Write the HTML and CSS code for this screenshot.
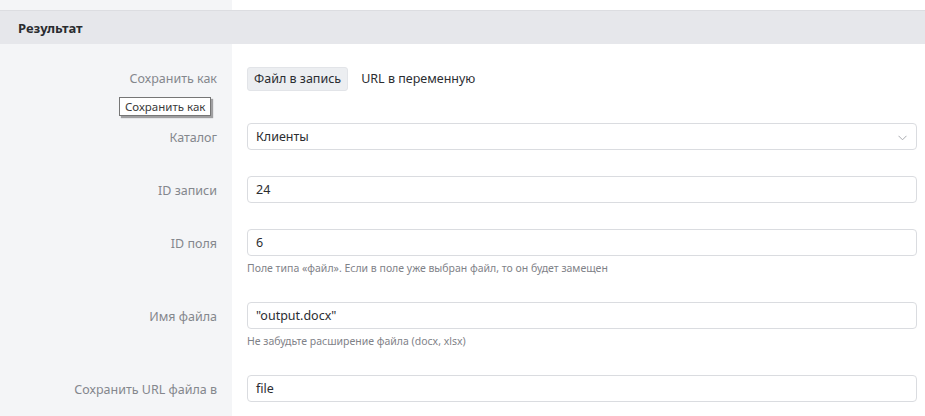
FILE: index.html
```html
<!DOCTYPE html>
<html lang="ru">
<head>
<meta charset="utf-8">
<link rel="stylesheet" href="styles.css">
</head>
<body>
<div class="page">
  <div class="top"><div class="top-left"></div><div class="top-right"></div></div>
  <div class="section-head">Результат</div>
  <div class="form">
    <div class="row row-first">
      <div class="label label-toggle"><span class="label-text">Сохранить как</span>
        <div class="tooltip">Сохранить как</div>
      </div>
      <div class="field">
        <div class="toggle">
          <span class="tog active">Файл в запись</span>
          <span class="tog">URL в переменную</span>
        </div>
      </div>
    </div>
    <div class="row">
      <div class="label"><span class="label-text">Каталог</span></div>
      <div class="field">
        <div class="input select">Клиенты
          <svg class="chev" width="9" height="6" viewBox="0 0 9 6"><path d="M0.5 0.8 L4.5 4.8 L8.5 0.8" fill="none" stroke="#a9abb0" stroke-width="1"/></svg>
        </div>
      </div>
    </div>
    <div class="row">
      <div class="label"><span class="label-text">ID записи</span></div>
      <div class="field"><div class="input">24</div></div>
    </div>
    <div class="row">
      <div class="label"><span class="label-text">ID поля</span></div>
      <div class="field"><div class="input">6</div>
        <div class="help">Поле типа «файл». Если в поле уже выбран файл, то он будет замещен</div>
      </div>
    </div>
    <div class="row">
      <div class="label"><span class="label-text">Имя файла</span></div>
      <div class="field"><div class="input">"output.docx"</div>
        <div class="help">Не забудьте расширение файла (docx, xlsx)</div>
      </div>
    </div>
    <div class="row">
      <div class="label"><span class="label-text">Сохранить URL файла в</span></div>
      <div class="field"><div class="input">file</div></div>
    </div>
  </div>
</div>
</body>
</html>
```
FILE: styles.css
```css
* { box-sizing: border-box; }
html, body { margin: 0; padding: 0; background: #ffffff; }
body {
  font-family: "Noto Sans", "Open Sans", sans-serif;
  font-size: 12.5px;
  color: #2b2d31;
  overflow: hidden;
  height: 416px;
}
.page { width: 925px; height: 416px; overflow: hidden; }
.top { display: flex; height: 10px; }
.top-left { width: 232px; background: #f4f5f7; }
.top-right { flex: 1; background: #fff; }
.section-head {
  height: 34px;
  background: #e6e7eb;
  border-top: 1px solid #dcdde1;
  padding-left: 18px;
  display: flex;
  align-items: center;
  font-weight: 700;
  font-size: 13px;
  color: #2a2c30;
}
.form {
  display: flex;
  flex-direction: column;
  background: linear-gradient(to right, #f4f5f7 0, #f4f5f7 232px, #fff 232px);
  padding-top: 23px;
  min-height: 400px;
}
.row { display: flex; padding-bottom: 26px; }
.row-first { padding-bottom: 32px; }
.label {
  width: 232px;
  flex: none;
  text-align: right;
  padding-right: 15px;
  position: relative;
  padding-top: 6px;
  color: #84878d;
}
.label-toggle { padding-top: 3px; }
.label-text { display: inline-block; line-height: 18px; }
.field { flex: 1; padding-left: 15px; padding-right: 8px; }
.toggle { display: flex; align-items: center; gap: 6px; }
.tog {
  height: 24px;
  line-height: 22px;
  padding: 0 6px;
  border-radius: 3px;
  border: 1px solid transparent;
  color: #2b2d31;
}
.tog.active { background: #eceef1; border-color: #e2e4e8; }
.input {
  height: 27px;
  border: 1px solid #dadce0;
  border-radius: 4px;
  background: #fff;
  padding: 0 8px;
  display: flex;
  align-items: center;
  color: #2b2d31;
  position: relative;
}
.select .chev { position: absolute; right: 9px; top: 11px; }
.help {
  font-size: 10.5px;
  color: #7f8288;
  margin-top: 5px;
  height: 15px;
  line-height: 15px;
}
.tooltip {
  position: absolute;
  left: 119px;
  top: 30px;
  width: 92px;
  height: 19px;
  background: #fff;
  border: 1px solid #767676;
  box-shadow: 2px 2px 1px rgba(0,0,0,0.35);
  color: #3a3a3a;
  font-size: 11.5px;
  text-align: left;
  padding-left: 5px;
  line-height: 17px;
}
```
